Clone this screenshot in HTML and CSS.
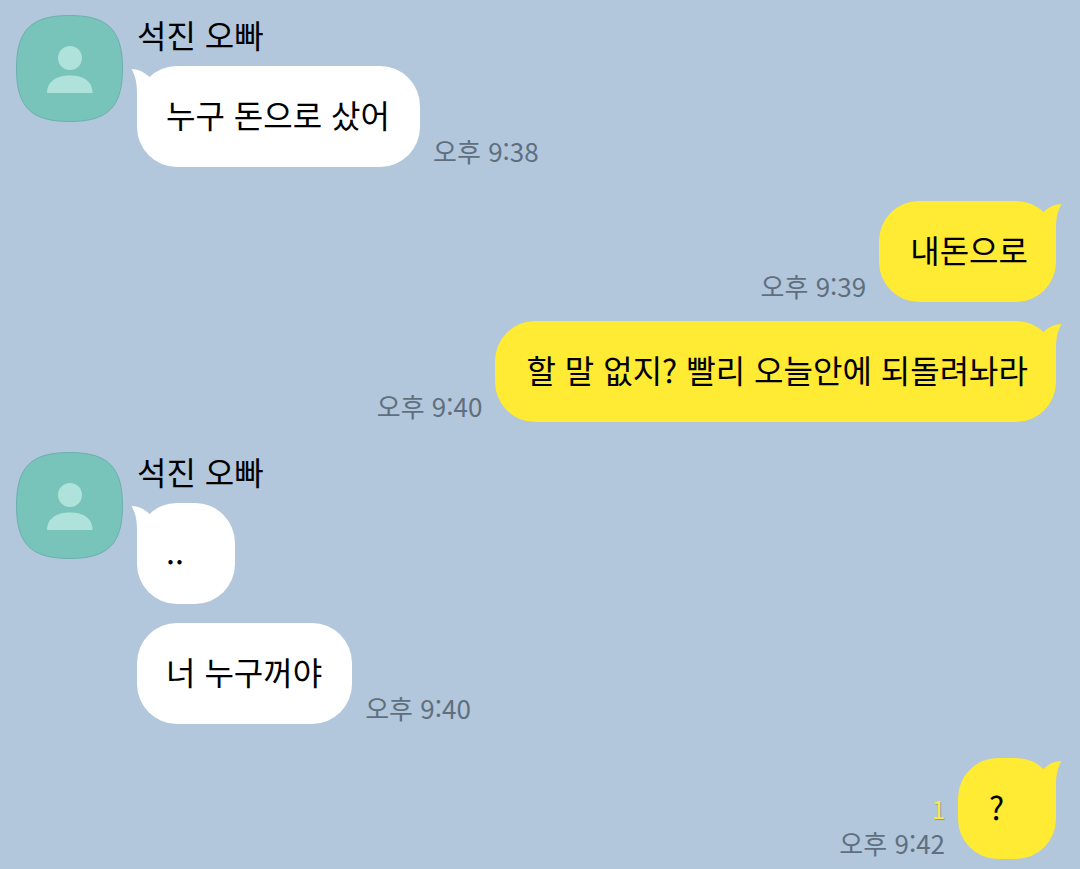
FILE: index.html
```html
<!DOCTYPE html>
<html lang="ko">
<head>
  <meta charset="UTF-8" />
  <meta name="viewport" content="width=device-width, initial-scale=1.0" />
  <title>석진 오빠</title>
  <link rel="stylesheet" href="styles.css">
</head>
<body>
  <!-- shared shapes -->
  <svg class="defs" width="0" height="0" aria-hidden="true">
    <symbol id="avatar" viewBox="0 0 107 107">
      <path d="M53.5 .5C92 .5 106.500 15 106.500 53.500S92 106.500 53.500 106.500 .5 92 .5 53.500 15 .5 53.500 .5Z" fill="#79c4ba" stroke="#6bafae"/>
      <circle cx="54" cy="43" r="12" fill="#afe2da"/>
      <path d="M31 78C31 66 41 60.500 54 60.500S76.500 66 76.500 78Z" fill="#afe2da"/>
    </symbol>
    <symbol id="tail" viewBox="0 0 24 40">
      <path d="M.5 3C7 3 13 6 18 10.500L24 30 6 40V28C6 18 5 11 .5 3Z" fill="currentColor"/>
    </symbol>
  </svg>

  <main class="chat">
    <section class="group other">
      <svg class="avatar" aria-hidden="true"><use href="#avatar"/></svg>
      <div class="messages">
        <div class="name">석진 오빠</div>
        <div class="row">
          <div class="bubble"><svg class="tail" aria-hidden="true"><use href="#tail"/></svg>누구 돈으로 샀어</div>
          <div class="meta"><time datetime="21:38">오후 9:38</time></div>
        </div>
      </div>
    </section>

    <section class="group me">
      <div class="messages">
        <div class="row">
          <div class="bubble"><svg class="tail" aria-hidden="true"><use href="#tail"/></svg>내돈으로</div>
          <div class="meta"><time datetime="21:39">오후 9:39</time></div>
        </div>
        <div class="row">
          <div class="bubble"><svg class="tail" aria-hidden="true"><use href="#tail"/></svg>할 말 없지? 빨리 오늘안에 되돌려놔라</div>
          <div class="meta"><time datetime="21:40">오후 9:40</time></div>
        </div>
      </div>
    </section>

    <section class="group other">
      <svg class="avatar" aria-hidden="true"><use href="#avatar"/></svg>
      <div class="messages">
        <div class="name">석진 오빠</div>
        <div class="row">
          <div class="bubble"><svg class="tail" aria-hidden="true"><use href="#tail"/></svg>..</div>
        </div>
        <div class="row">
          <div class="bubble">너 누구꺼야</div>
          <div class="meta"><time datetime="21:40">오후 9:40</time></div>
        </div>
      </div>
    </section>

    <section class="group me">
      <div class="messages">
        <div class="row">
          <div class="bubble"><svg class="tail" aria-hidden="true"><use href="#tail"/></svg>?</div>
          <div class="meta"><span class="unread">1</span><time datetime="21:42">오후 9:42</time></div>
        </div>
      </div>
    </section>
  </main>
</body>
</html>
```
FILE: styles.css
```css
* {
  box-sizing: border-box;
}
body {
  margin: 0;
  background: #b2c7db;
  color: #000;
  font-family: "Noto Sans CJK KR", sans-serif;
  font-size: 32px;
}
.defs {
  position: absolute;
}
.chat {
  padding: 15px 24px 9px 16px;
}
.group {
  display: flex;
  gap: 14px;
}
.group + .other {
  margin-top: 30px;
}
.group + .me {
  margin-top: 34px;
}
.avatar {
  flex: none;
  width: 107px;
  height: 107px;
}
.messages {
  flex: 1;
  display: flex;
  flex-direction: column;
  gap: 19px;
}
.name {
  line-height: 38px;
  margin-bottom: -6px;
}
.row {
  display: flex;
  align-items: flex-end;
  gap: 13px;
}
.me .row {
  flex-direction: row-reverse;
}
.bubble {
  position: relative;
  min-width: 98px;
  padding: 30px 30px 34px 29px;
  border-radius: 40px;
  background: #fff;
  line-height: 37px;
}
.me .bubble {
  padding-left: 31px;
  padding-right: 28px;
  background: #ffea34;
}
.tail {
  position: absolute;
  top: 0;
  left: -6px;
  width: 24px;
  height: 40px;
  color: #fff;
}
.me .tail {
  left: auto;
  right: -6px;
  color: #ffea34;
  transform: scaleX(-1);
}
.meta {
  display: flex;
  flex-direction: column;
  flex: none;
  color: #5f6f7e;
  font-size: 26px;
  line-height: 32px;
}
.me .meta {
  align-items: flex-end;
}
.unread {
  color: #f8e84c;
  font-size: 24px;
  line-height: 36px;
  text-shadow: 1px 1px 1px #8f9a86;
}
```
